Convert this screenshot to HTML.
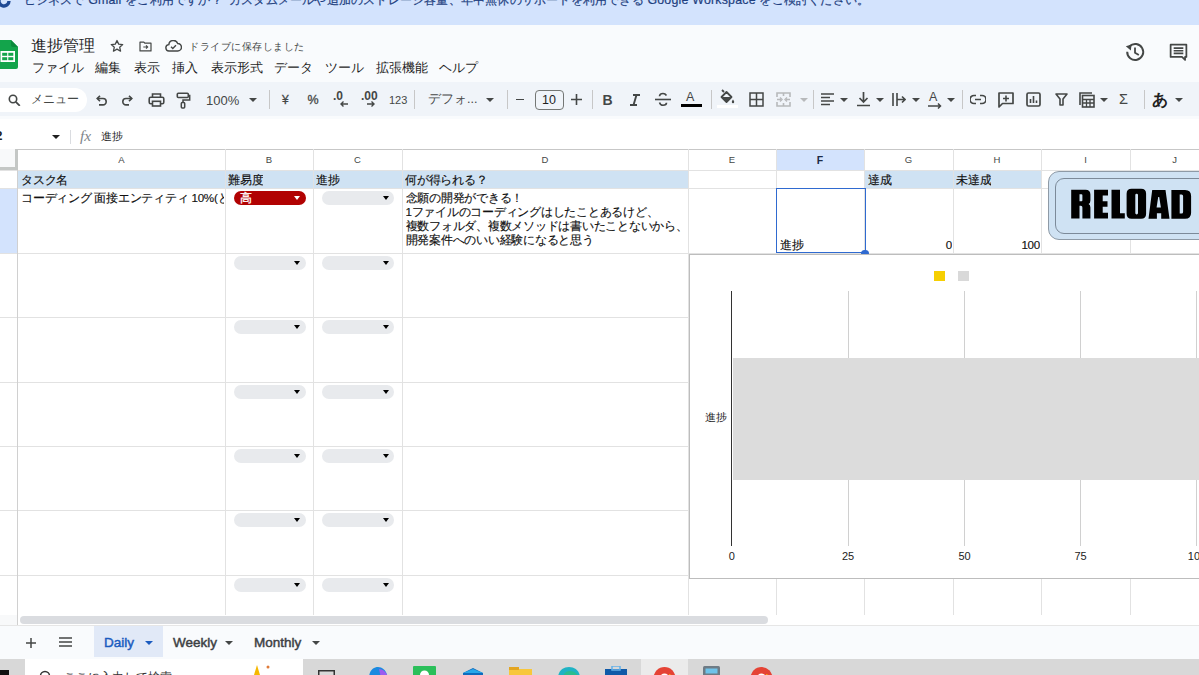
<!DOCTYPE html><html><head><meta charset="utf-8"><style>
*{margin:0;padding:0;box-sizing:border-box}
html,body{width:1199px;height:675px;overflow:hidden;background:#f9fbfd;font-family:"Liberation Sans",sans-serif;color:#1f1f1f}
body{position:relative}
.a{position:absolute;white-space:nowrap}
.ic{position:absolute}
.vl{position:absolute;width:1px;background:#e2e2e2}
.hl{position:absolute;height:1px;background:#e2e2e2}
.ch{position:absolute;height:20px;font-size:9.5px;color:#444746;text-align:center;line-height:22px}
.cell{position:absolute;letter-spacing:-0.25px;font-size:11.6px;line-height:14px;color:#111;-webkit-text-stroke:0.15px #111;white-space:nowrap;overflow:hidden}
.chip{position:absolute;height:14px;width:72px;border-radius:7px;background:#e8eaed}
.chip i{position:absolute;right:5.5px;top:5px;width:0;height:0;border-left:3.5px solid transparent;border-right:3.5px solid transparent;border-top:4.2px solid #000}
.dd{position:absolute;width:0;height:0;border-left:4px solid transparent;border-right:4px solid transparent;border-top:4px solid #444746}
.div{position:absolute;width:1px;height:19px;background:#c7c7c7;top:90px}
.mn{position:absolute;font-size:12.5px;color:#1f1f1f;top:60px;line-height:16px}
</style></head><body>
<div class="a" style="left:0;top:0;width:1199px;height:25px;background:#d3e3fd"></div>
<div class="a" style="left:23.5px;top:-8.5px;letter-spacing:0.2px;font-size:12.4px;line-height:16px;color:#1e3f80;-webkit-text-stroke:0.2px #1e3f80">ビジネスで Gmail をご利用ですか？</div>
<div class="a" style="left:229px;top:-8.5px;letter-spacing:0.2px;font-size:12.4px;line-height:16px;color:#1e3f80;-webkit-text-stroke:0.2px #1e3f80">カスタムメールや追加のストレージ容量、年中無休のサポートを利用できる Google Workspace をご検討ください。</div>
<svg class="ic" style="left:-3px;top:-6px" width="14" height="14" viewBox="0 0 14 14"><path d="M12 7a5 5 0 1 1-1.5-3.6" fill="none" stroke="#1f4a94" stroke-width="3.4"/></svg>
<div class="a" style="left:0;top:25px;width:1199px;height:58px;background:#f9fbfd"></div>
<svg class="ic" style="left:-4px;top:39.8px" width="22" height="29" viewBox="0 0 22 29"><path d="M2 0h13l7 7v20a2 2 0 0 1-2 2H2a2 2 0 0 1-2-2V2a2 2 0 0 1 2-2z" fill="#13a44b"/><path d="M15 0l7 7h-5a2 2 0 0 1-2-2z" fill="#0b8a3c"/><rect x="4.5" y="11" width="14.5" height="11" fill="#fff"/><rect x="6.2" y="12.8" width="5" height="3" fill="#13a44b"/><rect x="12.3" y="12.8" width="5" height="3" fill="#13a44b"/><rect x="6.2" y="17.2" width="5" height="3" fill="#13a44b"/><rect x="12.3" y="17.2" width="5" height="3" fill="#13a44b"/></svg>
<div class="a" style="left:31px;top:35.5px;font-size:16px;line-height:20px;color:#1f1f1f">進捗管理</div>
<svg class="ic" style="left:110px;top:39px" width="14" height="14" viewBox="0 0 24 24"><path d="M12 2.5l2.9 6.3 6.9.7-5.2 4.6 1.5 6.8L12 17.4l-6.1 3.5 1.5-6.8-5.2-4.6 6.9-.7z" fill="none" stroke="#444746" stroke-width="2.2" stroke-linejoin="round"/></svg>
<svg class="ic" style="left:138px;top:41px" width="15" height="11" viewBox="0 0 24 20"><path d="M2 2h7l2 2h11v14H2z" fill="none" stroke="#444746" stroke-width="2.2" stroke-linejoin="round"/><path d="M8 11h8M13 8l3 3-3 3" fill="none" stroke="#444746" stroke-width="2"/></svg>
<svg class="ic" style="left:165px;top:40px" width="17" height="12" viewBox="0 0 24 17"><path d="M6 15.5a4.5 4.5 0 0 1-.6-9A6.5 6.5 0 0 1 18 5a5 5 0 0 1 0 10.5z" fill="none" stroke="#444746" stroke-width="2"/><path d="M8.5 9.5l2.5 2.5 4.5-4.5" fill="none" stroke="#444746" stroke-width="2"/></svg>
<div class="a" style="left:189px;top:39.5px;letter-spacing:0.5px;font-size:10.4px;line-height:14px;color:#444746">ドライブに保存しました</div>
<div class="mn" style="left:32px">ファイル</div>
<div class="mn" style="left:95px">編集</div>
<div class="mn" style="left:134px">表示</div>
<div class="mn" style="left:172px">挿入</div>
<div class="mn" style="left:211px">表示形式</div>
<div class="mn" style="left:274px">データ</div>
<div class="mn" style="left:325px">ツール</div>
<div class="mn" style="left:376px">拡張機能</div>
<div class="mn" style="left:439px">ヘルプ</div>
<svg class="ic" style="left:1124px;top:41px" width="22" height="22" viewBox="0 0 22 22"><path d="M3.2 10.8A8 8 0 1 0 5.6 5.3" fill="none" stroke="#444746" stroke-width="2"/><path d="M1.8 5.2L7.6 3.4 6.8 9.4z" fill="#444746"/><path d="M11 6.5v5.2l3.8 2.4" fill="none" stroke="#444746" stroke-width="1.8"/></svg>
<svg class="ic" style="left:1168px;top:42px" width="21" height="21" viewBox="0 0 24 24"><path d="M3 3h18v14h-1.5v3.5L16 17H3z" fill="none" stroke="#444746" stroke-width="2" stroke-linejoin="round"/><path d="M6.5 7h11M6.5 10h11M6.5 13h11" stroke="#444746" stroke-width="1.8"/></svg>
<div class="a" style="left:0;top:82px;width:1199px;height:33.5px;background:#f0f4f9"></div>
<div class="a" style="left:-12px;top:87.5px;width:99px;height:24px;border-radius:12px;background:#fff"></div>
<svg class="ic" style="left:8px;top:94px" width="13" height="12" viewBox="0 0 13 12"><circle cx="5" cy="5" r="3.7" fill="none" stroke="#444746" stroke-width="1.6"/><path d="M7.8 7.8l4 4" stroke="#444746" stroke-width="1.8"/></svg>
<div class="a" style="left:31px;top:92px;font-size:12.4px;line-height:15px;color:#444746">メニュー</div>
<svg class="ic" style="left:95px;top:95px" width="13" height="11" viewBox="0 0 13 11"><path d="M2.5 3.5h5.5a3.2 3.2 0 0 1 0 6.4H4" fill="none" stroke="#444746" stroke-width="1.6"/><path d="M5 .8L2.2 3.5 5 6.2" fill="none" stroke="#444746" stroke-width="1.6"/></svg>
<svg class="ic" style="left:121px;top:95px" width="13" height="11" viewBox="0 0 13 11"><path d="M10.5 4.5H5a3.2 3.2 0 0 0 0 6.4h3" fill="none" stroke="#444746" stroke-width="1.6" transform="translate(0 -1)"/><path d="M8 .8l2.8 2.7L8 6.2" fill="none" stroke="#444746" stroke-width="1.6"/></svg>
<svg class="ic" style="left:148px;top:93px" width="17" height="14" viewBox="0 0 17 14"><path d="M4.5 4V1h8v3" fill="none" stroke="#444746" stroke-width="1.6"/><rect x="1.2" y="4.3" width="14.6" height="6.4" rx="1.5" fill="none" stroke="#444746" stroke-width="1.6"/><rect x="4.5" y="8.3" width="8" height="4.7" fill="#f0f4f9" stroke="#444746" stroke-width="1.6"/></svg>
<svg class="ic" style="left:176px;top:92px" width="15" height="17" viewBox="0 0 15 17"><rect x="1.3" y="1.3" width="11" height="4.2" rx="1" fill="none" stroke="#444746" stroke-width="1.6"/><path d="M12.3 3.4h1.4v4.5H7v3" fill="none" stroke="#444746" stroke-width="1.5"/><rect x="5.3" y="10.4" width="3.4" height="5.6" rx="1" fill="none" stroke="#444746" stroke-width="1.5"/></svg>
<div class="a" style="left:206px;top:93px;font-size:13px;line-height:15px;color:#444746">100%</div>
<div class="dd" style="left:249px;top:98px"></div>
<div class="div" style="left:269px"></div>
<div class="div" style="left:414px"></div>
<div class="div" style="left:507px"></div>
<div class="div" style="left:592px"></div>
<div class="div" style="left:711px"></div>
<div class="div" style="left:813px"></div>
<div class="div" style="left:962px"></div>
<div class="div" style="left:1144px"></div>
<div class="a" style="left:282px;top:93px;font-size:12px;line-height:14px;color:#444746;-webkit-text-stroke:0.3px #444746">¥</div>
<div class="a" style="left:307.5px;top:93px;font-size:12.5px;line-height:14px;color:#444746;-webkit-text-stroke:0.3px #444746">%</div>
<div class="a" style="left:333px;top:89px;font-size:12px;line-height:14px;color:#444746;font-weight:bold">.0</div>
<svg class="ic" style="left:340px;top:101px" width="8" height="6" viewBox="0 0 8 6"><path d="M8 3H1.5M3.5 .5L1 3l2.5 2.5" fill="none" stroke="#444746" stroke-width="1.4"/></svg>
<div class="a" style="left:361px;top:89px;font-size:12px;line-height:14px;color:#444746;font-weight:bold">.00</div>
<svg class="ic" style="left:367px;top:101px" width="8" height="6" viewBox="0 0 8 6"><path d="M0 3h6.5M4.5 .5L7 3 4.5 5.5" fill="none" stroke="#444746" stroke-width="1.4"/></svg>
<div class="a" style="left:389px;top:94px;font-size:11px;line-height:13px;color:#444746">123</div>
<div class="a" style="left:428px;top:92px;font-size:12.5px;line-height:15px;color:#444746">デフォ...</div>
<div class="dd" style="left:486px;top:98px"></div>
<div class="a" style="left:516px;top:99px;width:8px;height:1.4px;background:#444746"></div>
<div class="a" style="left:534.5px;top:89.5px;width:29px;height:20px;border:1px solid #747775;border-radius:4px;font-size:12.5px;line-height:18px;text-align:center;color:#1f1f1f">10</div>
<svg class="ic" style="left:571px;top:94px" width="11" height="11" viewBox="0 0 11 11"><path d="M5.5 0v11M0 5.5h11" stroke="#444746" stroke-width="1.6"/></svg>
<div class="a" style="left:602.5px;top:92px;font-size:14px;line-height:16px;color:#444746;font-weight:bold">B</div>
<svg class="ic" style="left:629px;top:94px" width="12" height="12" viewBox="0 0 12 12"><path d="M4 1h7M1 11h7M7.5 1L4.5 11" fill="none" stroke="#444746" stroke-width="1.9"/></svg>
<svg class="ic" style="left:655px;top:92px" width="16" height="15" viewBox="0 0 16 15"><path d="M11.5 3.5C10.5 2 9.3 1.5 8 1.5 6 1.5 4.5 2.5 4.5 4.2" fill="none" stroke="#444746" stroke-width="1.6"/><path d="M0 7.5h16" stroke="#444746" stroke-width="1.6"/><path d="M4.5 10.5c.6 1.8 2 2.8 3.5 2.8 2 0 3.5-1 3.5-2.5" fill="none" stroke="#444746" stroke-width="1.6"/></svg>
<div class="a" style="left:686px;top:90px;font-size:12.5px;line-height:14px;color:#444746">A</div>
<div class="a" style="left:681px;top:104px;width:21px;height:3px;background:#000"></div>
<svg class="ic" style="left:719px;top:89px" width="16" height="16" viewBox="0 0 16 16"><path d="M3 1l2 2M2.5 8L7.5 3l5 5-5 5z" fill="none" stroke="#444746" stroke-width="1.8" stroke-linejoin="round"/><path d="M3 8h9l-4.5 4.5z" fill="#444746"/><path d="M14 10.5c-.8 1.2-1.2 2-1.2 2.5a1.2 1.2 0 0 0 2.4 0c0-.5-.4-1.3-1.2-2.5z" fill="#444746"/></svg>
<div class="a" style="left:717px;top:105px;width:21px;height:3px;background:#fff"></div>
<svg class="ic" style="left:749px;top:92px" width="15" height="15" viewBox="0 0 15 15"><rect x="1" y="1" width="13" height="13" fill="none" stroke="#444746" stroke-width="1.5"/><path d="M7.5 1v13M1 7.5h13" stroke="#444746" stroke-width="1.5"/></svg>
<svg class="ic" style="left:776px;top:92px" width="15" height="15" viewBox="0 0 15 15"><path d="M1 5V1h13v4M1 10v4h13v-4M1 7.5h4M10 7.5h4M7.5 1v3M7.5 11v3" fill="none" stroke="#b7b9bb" stroke-width="1.6"/><path d="M4 5.5l2 2-2 2M11 5.5l-2 2 2 2" fill="none" stroke="#b7b9bb" stroke-width="1.4"/></svg>
<div class="dd" style="left:800px;top:98px;border-top-color:#b7b9bb"></div>
<svg class="ic" style="left:821px;top:93px" width="13" height="13" viewBox="0 0 13 13"><path d="M0 1h13M0 4.5h9M0 8h13M0 11.5h9" stroke="#444746" stroke-width="1.6"/></svg>
<div class="dd" style="left:840px;top:98px"></div>
<svg class="ic" style="left:857px;top:92px" width="13" height="15" viewBox="0 0 13 15"><path d="M6.5 0v10M2.5 6l4 4 4-4M0 13.5h13" fill="none" stroke="#444746" stroke-width="1.7"/></svg>
<div class="dd" style="left:876px;top:98px"></div>
<svg class="ic" style="left:892px;top:93px" width="14" height="13" viewBox="0 0 14 13"><path d="M1 0v13M5 0v13" stroke="#444746" stroke-width="1.6"/><path d="M5 6.5h8M10 3.5l3 3-3 3" fill="none" stroke="#444746" stroke-width="1.6"/></svg>
<div class="dd" style="left:912px;top:98px"></div>
<div class="a" style="left:929px;top:90px;font-size:12.5px;line-height:14px;color:#444746">A</div>
<svg class="ic" style="left:928px;top:103px" width="14" height="6" viewBox="0 0 14 6"><path d="M0 3h12M10 .5l2.5 2.5L10 5.5" fill="none" stroke="#444746" stroke-width="1.5"/></svg>
<div class="dd" style="left:947px;top:98px"></div>
<svg class="ic" style="left:970px;top:94px" width="16" height="11" viewBox="0 0 16 11"><path d="M6 1.5H4a4 4 0 0 0 0 8h2M10 1.5h2a4 4 0 0 1 0 8h-2M5 5.5h6" fill="none" stroke="#444746" stroke-width="1.7"/></svg>
<svg class="ic" style="left:998px;top:92px" width="16" height="16" viewBox="0 0 16 16"><path d="M1 1h14v10.5H4.5L1 15z" fill="none" stroke="#444746" stroke-width="1.7" stroke-linejoin="round"/><path d="M8 3.5v6M5 6.5h6" stroke="#444746" stroke-width="1.6"/></svg>
<svg class="ic" style="left:1026px;top:92px" width="15" height="15" viewBox="0 0 15 15"><rect x="1" y="1" width="13" height="13" rx="1.5" fill="none" stroke="#444746" stroke-width="1.7"/><path d="M4.5 11V7M7.5 11V4M10.5 11V8.5" stroke="#444746" stroke-width="1.6"/></svg>
<svg class="ic" style="left:1055px;top:93px" width="13" height="13" viewBox="0 0 13 13"><path d="M1 1h11L8 6v6H5V6z" fill="none" stroke="#444746" stroke-width="1.6" stroke-linejoin="round"/></svg>
<svg class="ic" style="left:1079px;top:92px" width="16" height="16" viewBox="0 0 16 16"><path d="M1 13V1h12" fill="none" stroke="#444746" stroke-width="1.6"/><rect x="3.5" y="3.5" width="11.5" height="11.5" fill="none" stroke="#444746" stroke-width="1.6"/><path d="M3.5 7.5h11.5M3.5 11h11.5M7.5 7.5v7.5M11 7.5v7.5" stroke="#444746" stroke-width="1.3"/></svg>
<div class="dd" style="left:1100px;top:98px"></div>
<div class="a" style="left:1119px;top:91px;font-size:14.5px;line-height:17px;color:#444746">Σ</div>
<div class="a" style="left:1152px;top:90px;font-size:16px;line-height:19px;color:#1f1f1f;font-weight:bold">あ</div>
<div class="dd" style="left:1175px;top:98px"></div>
<div class="a" style="left:0;top:118.5px;width:1199px;height:31px;background:#fff"></div>
<div class="a" style="left:-4.5px;top:128.5px;font-size:12.5px;line-height:14px;color:#1f1f1f;font-weight:bold">2</div>
<div class="dd" style="left:52px;top:135px;border-top-color:#1f1f1f"></div>
<div class="a" style="left:70px;top:130px;width:1px;height:14px;background:#dadce0"></div>
<div class="a" style="left:80px;top:127px;font-size:15.5px;line-height:17px;color:#80868b;font-style:italic;font-family:'Liberation Serif',serif">fx</div>
<div class="a" style="left:101px;top:128.5px;font-size:11px;line-height:14px;color:#1f1f1f">進捗</div>
<div class="a" style="left:0;top:149px;width:1199px;height:477px;background:#fff"></div>
<div class="a" style="left:776px;top:149px;width:88px;height:21px;background:#d3e3fd"></div>
<div class="a" style="left:0;top:149px;width:18px;height:466px;background:#fff"></div>
<div class="a" style="left:0;top:188px;width:17.5px;height:65px;background:#d3e3fd"></div>
<div class="a" style="left:18px;top:170px;width:670px;height:18px;background:#cfe2f3"></div>
<div class="a" style="left:864px;top:170px;width:177px;height:18px;background:#cfe2f3"></div>
<div class="hl" style="left:0;top:149px;width:1199px;background:#c7c7c7"></div>
<div class="hl" style="left:0;top:170px;width:1199px"></div>
<div class="hl" style="left:0;top:188px;width:1199px"></div>
<div class="hl" style="left:0;top:253px;width:1199px"></div>
<div class="hl" style="left:0;top:317px;width:1199px"></div>
<div class="hl" style="left:0;top:382px;width:1199px"></div>
<div class="hl" style="left:0;top:446px;width:1199px"></div>
<div class="hl" style="left:0;top:510px;width:1199px"></div>
<div class="hl" style="left:0;top:575px;width:1199px"></div>
<div class="vl" style="left:225px;top:149px;height:466px"></div>
<div class="vl" style="left:313px;top:149px;height:466px"></div>
<div class="vl" style="left:402px;top:149px;height:466px"></div>
<div class="vl" style="left:688px;top:149px;height:466px"></div>
<div class="vl" style="left:776px;top:149px;height:466px"></div>
<div class="vl" style="left:864px;top:149px;height:466px"></div>
<div class="vl" style="left:953px;top:149px;height:466px"></div>
<div class="vl" style="left:1041px;top:149px;height:466px"></div>
<div class="vl" style="left:1130px;top:149px;height:466px"></div>
<div class="vl" style="left:17px;top:170px;height:455px;background:#d0d0d0"></div>
<div class="a" style="left:0;top:149px;width:18px;height:21px;background:#f8f9fa;border-right:3px solid #c4c7c5;border-bottom:3px solid #c4c7c5"></div>
<div class="ch" style="left:18px;top:149px;width:207px;">A</div>
<div class="ch" style="left:225px;top:149px;width:88px;">B</div>
<div class="ch" style="left:313px;top:149px;width:89px;">C</div>
<div class="ch" style="left:402px;top:149px;width:286px;">D</div>
<div class="ch" style="left:688px;top:149px;width:88px;">E</div>
<div class="ch" style="left:776px;top:149px;width:88px;font-weight:bold;color:#1d2b45;font-size:10.5px">F</div>
<div class="ch" style="left:864px;top:149px;width:89px;">G</div>
<div class="ch" style="left:953px;top:149px;width:88px;">H</div>
<div class="ch" style="left:1041px;top:149px;width:89px;">I</div>
<div class="ch" style="left:1130px;top:149px;width:89px;">J</div>
<div class="cell" style="left:21px;top:173px">タスク名</div>
<div class="cell" style="left:228px;top:173px">難易度</div>
<div class="cell" style="left:316px;top:173px">進捗</div>
<div class="cell" style="left:405px;top:173px">何が得られる？</div>
<div class="cell" style="left:868px;top:173px">達成</div>
<div class="cell" style="left:956px;top:173px">未達成</div>
<div class="cell" style="left:21px;top:191px;width:203px">コーディング 面接エンティティ 10%(と</div>
<div class="cell" style="left:405.5px;top:191px">念願の開発ができる！</div>
<div class="cell" style="left:405.5px;top:205px">1ファイルのコーディングはしたことあるけど、</div>
<div class="cell" style="left:405.5px;top:219px">複数フォルダ、複数メソッドは書いたことないから、</div>
<div class="cell" style="left:405.5px;top:233px">開発案件へのいい経験になると思う</div>
<div class="cell" style="left:780px;top:238px">進捗</div>
<div class="cell" style="left:940px;top:238px;width:12px;text-align:right">0</div>
<div class="cell" style="left:1000px;top:238px;width:40px;text-align:right">100</div>
<div class="chip" style="left:233.5px;top:191px;background:#b10202"><span style="position:absolute;left:6px;top:0;font-size:12px;line-height:14px;color:#fff;-webkit-text-stroke:0.3px #fff">高</span><i style="border-top-color:#fff"></i></div>
<div class="chip" style="left:322px;top:191px"><i></i></div>
<div class="chip" style="left:233.5px;top:255.7px"><i></i></div>
<div class="chip" style="left:322px;top:255.7px"><i></i></div>
<div class="chip" style="left:233.5px;top:319.7px"><i></i></div>
<div class="chip" style="left:322px;top:319.7px"><i></i></div>
<div class="chip" style="left:233.5px;top:384.7px"><i></i></div>
<div class="chip" style="left:322px;top:384.7px"><i></i></div>
<div class="chip" style="left:233.5px;top:448.7px"><i></i></div>
<div class="chip" style="left:322px;top:448.7px"><i></i></div>
<div class="chip" style="left:233.5px;top:512.7px"><i></i></div>
<div class="chip" style="left:322px;top:512.7px"><i></i></div>
<div class="chip" style="left:233.5px;top:577.7px"><i></i></div>
<div class="chip" style="left:322px;top:577.7px"><i></i></div>
<div class="a" style="left:776px;top:187.8px;width:89.5px;height:65.5px;border:1.6px solid #2f6ad0"></div>
<div class="a" style="left:861px;top:249.5px;width:7.5px;height:7.5px;border-radius:50%;background:#2f6ad0"></div>
<div class="a" style="left:688.5px;top:253.5px;width:520px;height:325.5px;background:#fff;border:1.2px solid #bdbdbd"></div>
<div class="a" style="left:934px;top:271px;width:10.5px;height:10px;background:#f6cf02"></div>
<div class="a" style="left:958px;top:271px;width:10.5px;height:10px;background:#d9d9d9"></div>
<div class="a" style="left:847.5px;top:291px;width:1px;height:255px;background:#d0d0d0"></div>
<div class="a" style="left:964px;top:291px;width:1px;height:255px;background:#d0d0d0"></div>
<div class="a" style="left:1080px;top:291px;width:1px;height:255px;background:#d0d0d0"></div>
<div class="a" style="left:1196px;top:291px;width:1px;height:255px;background:#d0d0d0"></div>
<div class="a" style="left:732.5px;top:358px;width:470px;height:122px;background:#dcdcdc"></div>
<div class="a" style="left:731px;top:291px;width:1.4px;height:255px;background:#333"></div>
<div class="a" style="left:711.7px;top:550px;width:40px;text-align:center;font-size:11px;line-height:13px;color:#222">0</div>
<div class="a" style="left:828px;top:550px;width:40px;text-align:center;font-size:11px;line-height:13px;color:#222">25</div>
<div class="a" style="left:944.5px;top:550px;width:40px;text-align:center;font-size:11px;line-height:13px;color:#222">50</div>
<div class="a" style="left:1060.5px;top:550px;width:40px;text-align:center;font-size:11px;line-height:13px;color:#222">75</div>
<div class="a" style="left:1177px;top:550px;width:40px;text-align:center;font-size:11px;line-height:13px;color:#222">100</div>
<div class="a" style="left:705px;top:411px;font-size:11px;line-height:13px;color:#222">進捗</div>
<div class="a" style="left:1048px;top:171px;width:180px;height:69px;border-radius:11px;background:#cfe2f3;border:1px solid #8e9aa6"></div>
<div class="a" style="left:1055px;top:177.5px;width:170px;height:56px;border-radius:9px;border:1.2px solid #7c8a99"></div>
<svg class="ic" style="left:1060px;top:180px" width="139" height="45" viewBox="1060 180 139 45"><path fill="#000" fill-rule="evenodd" d="M1071.2 189.7H1085.5Q1090.4 189.7 1090.4 194.6V200.5Q1090.4 203.3 1088.6 204Q1090.4 204.8 1090.4 207.5V218.5H1082.4V207.5Q1082.4 205.7 1080.9 205.7H1079.5V218.5H1071.2ZM1079.5 194.3H1081.5Q1082.4 194.3 1082.4 195.3V200.2Q1082.4 201.2 1081.5 201.2H1079.5Z M1094.1 189.7H1108V195.6H1102.7V201.2H1107.5V206.8H1102.7V212.7H1108V218.5H1094.1Z M1111.5 189.7H1120V213.2H1124.8V218.5H1111.5Z M1131.6 188.8H1141.1Q1146.1 188.8 1146.1 193.8V213.7Q1146.1 218.7 1141.1 218.7H1131.6Q1126.6 218.7 1126.6 213.7V193.8Q1126.6 188.8 1131.6 188.8ZM1135.3 195Q1135.3 193.7 1136.65 193.7Q1138 193.7 1138 195V213.1Q1138 214.4 1136.65 214.4Q1135.3 214.4 1135.3 213.1Z M1152.2 190H1165.5L1169.5 218.7H1161.2V213.2H1156.9V218.7H1148.5ZM1158.2 197.1H1159.2L1160.9 207.6H1156.6Z M1171.4 190H1185.1Q1191.1 190 1191.1 196V212.7Q1191.1 218.7 1185.1 218.7H1171.4ZM1179.7 194.6H1181.6Q1183.1 194.6 1183.1 196.1V212Q1183.1 213.5 1181.6 213.5H1179.7Z"/></svg>
<div class="a" style="left:18px;top:615px;width:1181px;height:11px;background:#fff"></div>
<div class="a" style="left:0;top:615px;width:18px;height:11px;background:#f8f9fa"></div>
<div class="a" style="left:20px;top:616px;width:748px;height:8px;border-radius:4px;background:#dadce0"></div>
<div class="a" style="left:0;top:625px;width:1199px;height:1px;background:#e6e6e6"></div>
<div class="a" style="left:0;top:626px;width:1199px;height:33px;background:#f9fbfd"></div>
<svg class="ic" style="left:26px;top:637.5px" width="10" height="10" viewBox="0 0 10 10"><path d="M5 0v10M0 5h10" stroke="#444746" stroke-width="1.5"/></svg>
<svg class="ic" style="left:59px;top:637px" width="13" height="10" viewBox="0 0 13 10"><path d="M0 1h13M0 5h13M0 9h13" stroke="#444746" stroke-width="1.5"/></svg>
<div class="a" style="left:94px;top:626px;width:69px;height:31px;background:#e1e9f7"></div>
<div class="a" style="left:104px;top:635px;font-size:13.5px;line-height:16px;color:#1a5bbf;-webkit-text-stroke:0.45px #1a5bbf">Daily</div>
<div class="dd" style="left:145px;top:641px;border-top-color:#1a5bbf"></div>
<div class="a" style="left:173px;top:635px;font-size:13.5px;line-height:16px;color:#3c4043;-webkit-text-stroke:0.45px #3c4043">Weekly</div>
<div class="dd" style="left:225px;top:641px"></div>
<div class="a" style="left:254px;top:635px;font-size:13.5px;line-height:16px;color:#3c4043;-webkit-text-stroke:0.45px #3c4043">Monthly</div>
<div class="dd" style="left:312px;top:641px"></div>
<div class="a" style="left:0;top:659px;width:1199px;height:16px;background:#d8d8d8"></div>
<div class="a" style="left:0;top:670px;width:9px;height:5px;background:#111"></div>
<div class="a" style="left:25px;top:659px;width:278px;height:16px;background:#fff"></div>
<svg class="ic" style="left:39px;top:670px" width="12" height="8" viewBox="0 0 12 8"><circle cx="6" cy="6" r="4.5" fill="none" stroke="#333" stroke-width="1.5"/></svg>
<div class="a" style="left:64px;top:670px;font-size:12px;line-height:14px;color:#333">ここに入力して検索</div>
<svg class="ic" style="left:248px;top:665px" width="24" height="10" viewBox="0 0 24 10"><path d="M9 0l3 10H6z" fill="#f5b800"/><circle cx="20" cy="2" r="1.5" fill="#e07b39"/></svg>
<div class="a" style="left:641px;top:659px;width:47px;height:16px;background:#ebebeb"></div>
<svg class="ic" style="left:318px;top:666px" width="24" height="12" viewBox="0 0 24 12"><rect x="0" y="4" width="17" height="8" fill="#333"/><rect x="1.5" y="5.5" width="14" height="6" fill="#d8d8d8"/></svg>
<svg class="ic" style="left:366px;top:666px" width="24" height="12" viewBox="0 0 24 12"><path d="M3 12C3 4 8 1 12 1s8 3 9 8v3z" fill="#1b8ae0"/><path d="M13 3c4 0 8 3 9 9h-7z" fill="#9b5cf0"/></svg>
<svg class="ic" style="left:413px;top:666px" width="24" height="12" viewBox="0 0 24 12"><rect x="0" y="0" width="23" height="12" rx="1" fill="#2bbf5a"/><circle cx="11.5" cy="9" r="4.5" fill="#fff"/></svg>
<svg class="ic" style="left:461px;top:666px" width="24" height="12" viewBox="0 0 24 12"><path d="M2 7l10-5 10 5v5H2z" fill="#0f6cbd"/><path d="M2 7l10-4 10 4" fill="#28a8ea"/></svg>
<svg class="ic" style="left:509px;top:666px" width="24" height="12" viewBox="0 0 24 12"><rect x="0" y="3" width="23" height="9" fill="#f8c73c"/><rect x="0" y="1" width="10" height="3" fill="#e3a521"/></svg>
<svg class="ic" style="left:557px;top:666px" width="24" height="12" viewBox="0 0 24 12"><path d="M1 12C1 5 6 1 12 1s11 4 11 11z" fill="#1fb3c4"/><path d="M6 12c0-4 3-7 7-7s8 3 9 7z" fill="#35c36b" opacity=".6"/></svg>
<svg class="ic" style="left:605px;top:666px" width="24" height="12" viewBox="0 0 24 12"><rect x="0" y="3" width="22" height="9" fill="#0f5aa8"/><rect x="7" y="0" width="8" height="4" fill="none" stroke="#63b0e8" stroke-width="1.5"/></svg>
<svg class="ic" style="left:653px;top:666px" width="24" height="12" viewBox="0 0 24 12"><circle cx="11.5" cy="12" r="11" fill="#e54335"/><circle cx="11.5" cy="12" r="4.5" fill="#fff"/><path d="M16 8a11 11 0 0 1 6 4h-6z" fill="#fbbc04"/></svg>
<svg class="ic" style="left:703px;top:666px" width="24" height="12" viewBox="0 0 24 12"><rect x="0" y="0" width="17" height="12" rx="1.5" fill="#6e7b85"/><rect x="2.5" y="2.5" width="12" height="5" fill="#6fc3ea"/></svg>
<svg class="ic" style="left:750px;top:666px" width="24" height="12" viewBox="0 0 24 12"><circle cx="11.5" cy="12" r="11" fill="#e54335"/><circle cx="11.5" cy="12" r="4.5" fill="#fff"/><path d="M16 8a11 11 0 0 1 6 4h-6z" fill="#fbbc04"/></svg>
<div class="a" style="left:17px;top:615px;width:1px;height:10px;background:#d0d0d0"></div>
</body></html>
